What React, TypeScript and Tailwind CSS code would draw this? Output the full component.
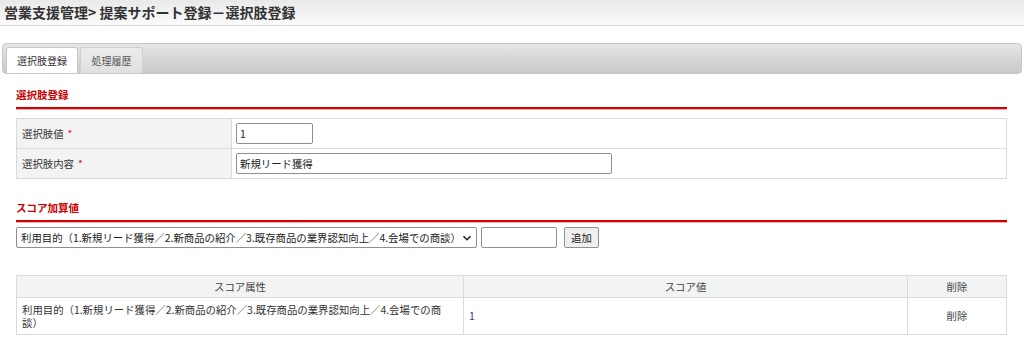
import React from 'react';

const font = { fontFamily: '"Noto Sans CJK JP", "Noto Sans", sans-serif' };

const SectionTitle: React.FC<{ title: string }> = ({ title }) => (
  <div>
    <div className="h-[24px] flex items-center text-[10.5px] font-bold text-[#cc0000]">{title}</div>
    <div className="h-[3px] bg-[#d40000] border-b border-[#f0b0b0]"></div>
  </div>
);

const Required = () => <span className="text-[#e00000] ml-[4px]">*</span>;

const App: React.FC = () => {
  return (
    <div className="w-[1024px] h-[341px] bg-white text-[#333] overflow-hidden" style={font}>
      {/* page header */}
      <div className="h-[26px] bg-gradient-to-b from-[#e9e9e9] to-[#fbfbfb] border-b border-[#dcdcdc] flex items-center pl-[4px]">
        <h1 className="text-[14px] font-bold text-[#333]">営業支援管理&gt; 提案サポート登録－選択肢登録</h1>
      </div>

      {/* tabs */}
      <div className="mt-[17px] mx-[2px] h-[31px] border border-[#c8c8c8] rounded-[4px] bg-gradient-to-b from-[#e6e6e6] to-[#c9c9c9] flex items-end pl-[3px] gap-[2px]">
        <div className="w-[72px] h-[26px] bg-white border border-b-0 border-[#c8c8c8] rounded-t-[3px] flex items-center justify-center text-[10px] text-[#333]">選択肢登録</div>
        <div className="w-[63px] h-[26px] bg-gradient-to-b from-[#ececec] to-[#e0e0e0] border border-b-0 border-[#d0d0d0] rounded-t-[3px] flex items-center justify-center text-[10px] text-[#555]">処理履歴</div>
      </div>

      <div className="px-[16px] pr-[17px] pt-[9px]">
        <SectionTitle title="選択肢登録" />

        <table className="mt-[8px] w-full border-collapse text-[10.4px]">
          <tbody>
            <tr className="h-[30px]">
              <td className="w-[215px] bg-[#f3f3f3] border border-[#dadada] pl-[5px]">選択肢値<Required /></td>
              <td className="border border-[#dadada] pl-[4px]">
                <input defaultValue="1" className="w-[77px] h-[21px] border border-[#8f8f8f] rounded-[2px] px-[3px] text-[10.4px] text-[#222] outline-none" />
              </td>
            </tr>
            <tr className="h-[30px]">
              <td className="bg-[#f3f3f3] border border-[#dadada] pl-[5px]">選択肢内容<Required /></td>
              <td className="border border-[#dadada] pl-[4px]">
                <input defaultValue="新規リード獲得" className="w-[376px] h-[21px] border border-[#8f8f8f] rounded-[2px] px-[3px] text-[10.4px] text-[#222] outline-none" />
              </td>
            </tr>
          </tbody>
        </table>

        <div className="mt-[17px]">
          <SectionTitle title="スコア加算値" />
        </div>

        <div className="mt-[4px] flex items-center text-[10.4px]">
          <div className="w-[461px] h-[21px] border border-[#8f8f8f] rounded-[2px] flex items-center justify-between pl-[4px] pr-[4px] text-[#222] whitespace-nowrap">
            <span>利用目的（1.新規リード獲得／2.新商品の紹介／3.既存商品の業界認知向上／4.会場での商談）</span>
            <svg width="10" height="10" viewBox="0 0 10 10"><path d="M1.5 3.2 L5 6.7 L8.5 3.2" fill="none" stroke="#222" strokeWidth="1.6" /></svg>
          </div>
          <input className="ml-[4px] w-[76px] h-[21px] border border-[#8f8f8f] rounded-[2px] outline-none" />
          <button className="ml-[7px] w-[35px] h-[21px] border border-[#8f8f8f] rounded-[2px] bg-[#efefef] text-[10.4px] text-[#222]">追加</button>
        </div>

        <table className="mt-[27px] w-full border-collapse text-[10.4px]">
          <thead>
            <tr className="h-[22px] bg-[#f2f3f3] text-[#444]">
              <th className="w-[447px] border border-[#dadada] font-normal">スコア属性</th>
              <th className="border border-[#dadada] font-normal">スコア値</th>
              <th className="w-[99px] border border-[#dadada] font-normal">削除</th>
            </tr>
          </thead>
          <tbody>
            <tr className="h-[37px]">
              <td className="border border-[#dadada] pl-[5px] pr-[13px] leading-[13px]">利用目的（1.新規リード獲得／2.新商品の紹介／3.既存商品の業界認知向上／4.会場での商談）</td>
              <td className="border border-[#dadada] px-[5px] text-[#3b3b8c]">1</td>
              <td className="border border-[#dadada] text-center text-[#444]">削除</td>
            </tr>
          </tbody>
        </table>
      </div>
    </div>
  );
};

export default App;
